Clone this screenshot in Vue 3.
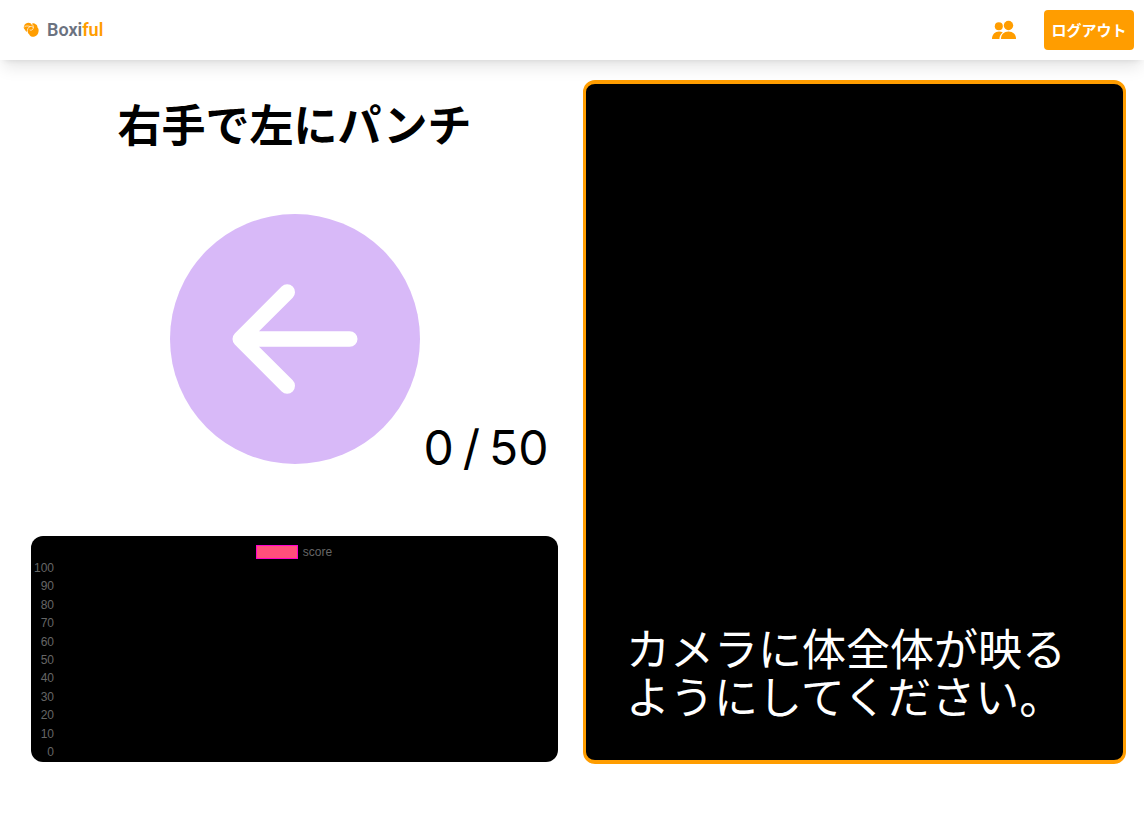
<script setup>
const ticks = [100, 90, 80, 70, 60, 50, 40, 30, 20, 10, 0]
const count = 0
const goal = 50
</script>

<template>
  <div class="page">
    <header class="header">
      <a class="brand" href="#">
        <svg class="logo" viewBox="0 0 16 16" aria-hidden="true">
          <path
            fill="#ff9d00"
            d="M3 1.500C4.500 .6 6.500 .7 8 1.600L8.500 5L5 10.300C3.500 10 2.300 8.800 1.600 7.300C.6 6.300 .5 5 1.200 4C1.300 2.800 2 2 3 1.500Z"
          />
          <path
            fill="#ff9d00"
            d="M8.500 2C9.800 1 11.500 1.200 12.600 2.300C13.900 2.800 14.500 3.900 14.400 5.200C15.600 6.300 15.900 8 15.500 9.700C15.200 12 13.500 14.200 11 14.700C8.700 15 7 13.800 6.300 12.400C5.200 11.700 4.600 10.200 4.800 8.700C4.500 7 5.400 5.400 7 4.700Z"
          />
          <path
            fill="none"
            stroke="#fff"
            stroke-width=".7"
            d="M1.400 5C2.500 3.900 4.500 3.600 7 4.500M4.600 10.300C3.900 7.700 4.900 5.400 7 4.600C9 3.900 10.500 4.800 10.200 6.400C9.900 7.900 8 8.700 6.700 7.900M8.100 1.500C9.600 2.400 10.700 4 10.200 6"
          />
        </svg>
        <span class="name">Boxi<span class="accent">ful</span></span>
      </a>
      <nav class="nav">
        <a class="people" href="#" aria-label="フレンド">
          <svg viewBox="0 0 24 20" aria-hidden="true" fill="#ff9d00">
            <circle cx="6.800" cy="6.200" r="4" />
            <circle cx="16.500" cy="5.500" r="4.700" />
            <path d="M0 19C0 14.500 3 11.500 7 11.500C8.500 11.500 9.800 11.800 10.800 12.400C8.800 14 7.500 16 7.400 19Z" />
            <path d="M9 19C9 14.300 12 11.500 16.500 11.500S24 14.300 24 19Z" />
          </svg>
        </a>
        <button class="logout" type="button">ログアウト</button>
      </nav>
    </header>

    <main class="main">
      <section class="training">
        <h1 class="title">右手で左にパンチ</h1>
        <div class="target">
          <svg class="arrow" viewBox="0 0 16 16" role="img" aria-label="左">
            <circle cx="8" cy="8" r="8" fill="#d8b9f8" />
            <path
              d="M11.500 8H4.500M7.500 5L4.500 8L7.500 11"
              fill="none"
              stroke="#fff"
              stroke-linecap="round"
              stroke-linejoin="round"
            />
          </svg>
          <p class="counter"><span>{{ count }}</span> <span>/</span> <span>{{ goal }}</span></p>
        </div>
        <div class="chart">
          <div class="legend"><span class="swatch"></span>score</div>
          <ol class="ticks">
            <li v-for="tick in ticks" :key="tick">{{ tick }}</li>
          </ol>
        </div>
      </section>

      <section class="camera">
        <p class="notice">カメラに体全体が映るようにしてください。</p>
      </section>
    </main>
  </div>
</template>

<style>
body {
  margin: 0;
  background: #fff;
}
</style>

<style scoped>
.page {
  display: flex;
  flex-direction: column;
  min-height: 100vh;
  box-sizing: border-box;
  padding-bottom: 54px;
  color: #000;
  font-family: Roboto, "Noto Sans CJK JP", sans-serif;
}

.header {
  display: flex;
  align-items: center;
  justify-content: space-between;
  height: 60px;
  box-sizing: border-box;
  padding: 0 10px 0 23px;
  background: #fff;
  box-shadow: 0 10px 15px -3px rgba(0, 0, 0, 0.1), 0 4px 6px -4px rgba(0, 0, 0, 0.1);
}

.brand {
  display: flex;
  align-items: center;
  gap: 8px;
  color: #6b7280;
  text-decoration: none;
}

.logo {
  width: 16px;
  height: 16px;
}

.name {
  font-size: 18px;
  line-height: 28px;
  font-weight: 600;
}

.accent {
  color: #ff9d00;
}

.nav {
  display: flex;
  align-items: center;
  gap: 28px;
}

.people svg {
  display: block;
  width: 24px;
  height: 20px;
}

.logout {
  width: 90px;
  height: 40px;
  padding: 0 0 2px;
  border: 0;
  border-radius: 4px;
  background: #ff9d00;
  color: #fff;
  font-family: "Noto Sans CJK JP", sans-serif;
  font-size: 15px;
  font-weight: 700;
}

.main {
  flex: 1;
  display: grid;
  grid-template-columns: 527fr 543fr;
  gap: 25px;
  padding: 20px 18px 0 31px;
}

.training {
  display: flex;
  flex-direction: column;
  padding-bottom: 2px;
}

.title {
  margin: 13px 0 0;
  font-family: "Noto Sans CJK JP", sans-serif;
  font-size: 44px;
  line-height: 60px;
  font-weight: 700;
  text-align: center;
}

.target {
  position: relative;
  align-self: center;
  margin: 61px 0 72px;
}

.arrow {
  display: block;
  width: 250px;
  height: 250px;
}

.counter {
  position: absolute;
  left: 100%;
  bottom: -8px;
  display: flex;
  gap: 9px;
  margin: 0;
  padding-left: 4px;
  font-family: Inter, sans-serif;
  font-size: 48px;
  line-height: 48px;
  white-space: nowrap;
}

.chart {
  flex: 1;
  display: flex;
  flex-direction: column;
  box-sizing: border-box;
  padding: 8px 4px 4px 3px;
  border-radius: 12px;
  background: #000;
  color: #666;
  font-family: "Liberation Sans", sans-serif;
  font-size: 12px;
  line-height: 12px;
}

.legend {
  display: flex;
  align-items: center;
  justify-content: center;
  gap: 5px;
  height: 16px;
}

.swatch {
  width: 42px;
  height: 14px;
  box-sizing: border-box;
  border: 1px solid #f0c;
  background: #ff4f7b;
}

.ticks {
  flex: 1;
  display: flex;
  flex-direction: column;
  justify-content: space-between;
  width: 20px;
  margin: 2px 0 0;
  padding: 0;
  list-style: none;
  text-align: right;
}

.camera {
  display: flex;
  align-items: flex-end;
  box-sizing: border-box;
  padding: 0 40px 41px;
  border: solid #ff9d00;
  border-width: 4px 3px;
  border-radius: 12px;
  background: #000;
}

.notice {
  margin: 0;
  color: #fff;
  font-family: "Noto Sans CJK JP", sans-serif;
  font-size: 44px;
  font-weight: 400;
  line-height: 48px;
}
</style>
